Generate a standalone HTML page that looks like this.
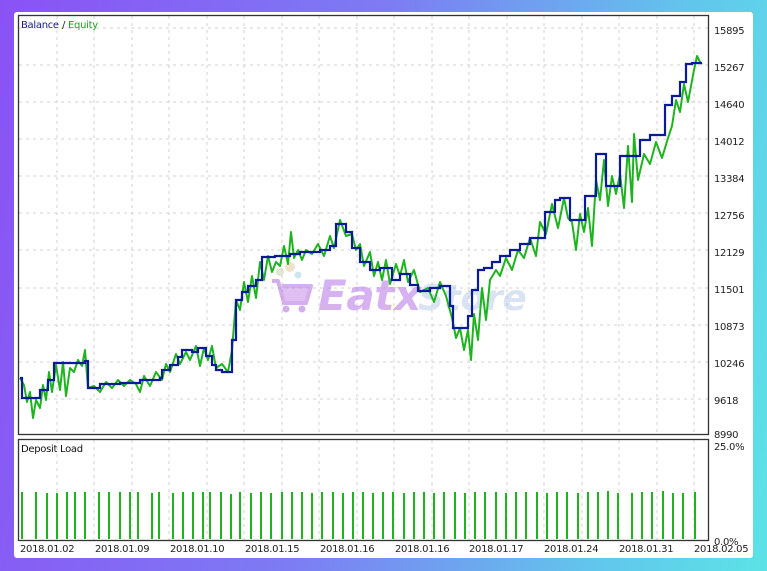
<!DOCTYPE html>
<html><head><meta charset="utf-8"><style>
html,body{margin:0;padding:0;width:767px;height:571px;overflow:hidden}
body{background:linear-gradient(100deg,#8a52f5 0%,#7d7cf3 45%,#62c6ec 80%,#5ce3e6 100%)}
svg{position:absolute;left:0;top:0}
text{font-family:"DejaVu Sans","Liberation Sans",sans-serif;letter-spacing:-0.3px}
</style></head><body>
<svg width="767" height="571" viewBox="0 0 767 571">
<rect x="14" y="12" width="739" height="546" rx="3" fill="#fff"/>
<g stroke="#d2d2d2" stroke-width="1" stroke-dasharray="3,4" fill="none">
<path d="M57 16V434M94 16V434M132 16V434M169 16V434M207 16V434M244 16V434M282 16V434M319 16V434M357 16V434M394 16V434M432 16V434M469 16V434M507 16V434M544 16V434M582 16V434M619 16V434M657 16V434M694 16V434"/>
<path d="M57 440V540M94 440V540M132 440V540M169 440V540M207 440V540M244 440V540M282 440V540M319 440V540M357 440V540M394 440V540M432 440V540M469 440V540M507 440V540M544 440V540M582 440V540M619 440V540M657 440V540M694 440V540"/>
<path d="M19 28H709M19 65H709M19 102H709M19 139H709M19 176H709M19 213H709M19 250H709M19 288H709M19 325H709M19 362H709M19 399H709"/>
</g>
<g opacity="0.55">
<circle cx="290" cy="267" r="5" fill="#e8c9a0"/><circle cx="280" cy="272" r="4" fill="#c8d8a8"/><circle cx="298" cy="275" r="3.5" fill="#a8d0e0"/>
<path d="M272 281h6l6 22h22l5-17h-29" stroke="#b070e0" stroke-width="4" fill="#c58ae8" stroke-linejoin="round"/>
<circle cx="286" cy="309" r="3.5" fill="#b070e0"/><circle cx="302" cy="309" r="3.5" fill="#b070e0"/>
<text x="318" y="310" font-size="42" font-weight="bold" font-style="italic" fill="#b874e8" font-family="Liberation Sans">Eatx</text>
<text x="418" y="310" font-size="36" font-weight="bold" font-style="italic" fill="#a8c0e0" opacity="0.8" font-family="Liberation Sans">Store</text>
</g>
<polyline fill="none" stroke="#1fb41f" stroke-width="2" stroke-linejoin="round" points="20,378 24,385 27,402 30,392 33,418 36,400 40,408 43,385 46,400 49,372 52,392 56,365 60,390 63,362 66,396 70,368 74,372 78,360 82,366 85,350 88,388 94,386 100,392 106,382 112,388 118,380 124,386 130,380 136,384 140,392 144,376 150,386 156,372 162,380 166,364 170,372 176,354 180,364 186,352 190,360 196,346 200,366 204,348 208,360 212,346 216,368 222,364 228,372 232,350 236,300 240,310 244,282 248,302 252,276 256,298 260,262 264,280 268,256 272,272 276,262 280,266 284,246 288,264 291,232 294,258 298,250 302,260 306,250 312,254 318,244 324,256 330,236 334,248 340,220 346,236 352,234 356,250 360,244 364,266 370,252 374,276 378,262 382,280 386,260 390,284 396,264 400,276 404,260 408,282 414,270 420,292 428,288 434,302 440,282 446,296 452,318 456,338 460,328 464,350 468,330 471,360 474,314 478,340 482,288 486,320 490,280 496,270 500,276 506,258 512,270 518,250 524,258 530,238 536,256 540,222 546,234 552,204 558,228 564,198 568,218 572,222 576,250 580,214 584,232 588,208 592,246 596,180 600,200 604,160 608,206 612,176 616,194 620,174 624,208 628,146 632,202 634,134 638,180 644,154 650,164 656,142 662,158 668,138 672,126 676,100 680,112 684,84 688,102 694,70 697,56 700,62 702,64"/>
<polyline fill="none" stroke="#0a1a9a" stroke-width="2.2" stroke-linejoin="miter" points="20,378 22,378 22,398 40,398 40,390 48,390 48,380 54,380 54,363 85,363 85,361 88,361 88,388 100,388 100,384 120,384 120,383 140,383 140,380 160,380 160,378 162,378 162,370 170,370 170,365 178,365 178,357 182,357 182,350 192,350 192,352 198,352 198,348 206,348 206,356 212,356 212,365 216,365 216,370 222,370 222,372 232,372 232,340 236,340 236,300 242,300 242,292 248,292 248,286 256,286 256,280 262,280 262,257 275,257 275,256 290,256 290,254 300,254 300,252 320,252 320,250 330,250 330,246 336,246 336,224 346,224 346,232 352,232 352,248 360,248 360,262 370,262 370,270 380,270 380,268 392,268 392,280 400,280 400,274 410,274 410,285 418,285 418,291 430,291 430,288 440,288 440,286 450,286 450,306 453,306 453,328 468,328 468,316 472,316 472,290 478,290 478,270 484,270 484,268 492,268 492,262 500,262 500,256 510,256 510,250 520,250 520,244 530,244 530,238 545,238 545,212 555,212 555,200 560,200 560,198 570,198 570,220 585,220 585,196 596,196 596,154 606,154 606,186 620,186 620,156 640,156 640,140 650,140 650,135 665,135 665,105 672,105 672,96 680,96 680,82 686,82 686,64 692,64 692,63 702,63"/>
<rect x="18.5" y="15.5" width="690" height="419" fill="none" stroke="#333" stroke-width="1.3"/>
<rect x="18.5" y="439.5" width="690" height="101" fill="none" stroke="#333" stroke-width="1.3"/>
<text x="21" y="28" font-size="10" fill="#1a1a8a">Balance</text>
<text x="62" y="28" font-size="10" fill="#222">/</text>
<text x="68" y="28" font-size="10" fill="#1fa01f">Equity</text>
<text x="21" y="452" font-size="10" fill="#111">Deposit Load</text>
<g font-size="10" fill="#222">
<text x="714" y="34">15895</text><text x="714" y="71">15267</text><text x="714" y="108">14640</text><text x="714" y="145">14012</text><text x="714" y="182">13384</text><text x="714" y="219">12756</text><text x="714" y="256">12129</text><text x="714" y="293">11501</text><text x="714" y="330">10873</text><text x="714" y="367">10246</text><text x="714" y="404">9618</text><text x="714" y="438">8990</text>
<text x="714" y="450">25.0%</text><text x="714" y="545">0.0%</text>
<text x="20" y="552">2018.01.02</text><text x="95" y="552">2018.01.09</text><text x="170" y="552">2018.01.10</text><text x="245" y="552">2018.01.15</text><text x="320" y="552">2018.01.16</text><text x="395" y="552">2018.01.16</text><text x="469" y="552">2018.01.17</text><text x="544" y="552">2018.01.24</text><text x="619" y="552">2018.01.31</text><text x="694" y="552">2018.02.05</text>
</g>
<g stroke="#1fb41f" stroke-width="2">
<path d="M22 492V539M36 492V539M47 493V539M57 493V539M67 492V539M75 492V539M85 492V539M99 492V539M109 492V539M120 492V539M130 492V539M138 492V539M152 493V539M159 492V539M173 493V539M183 492V539M193 492V539M203 492V539M210 492V539M221 492V539M231 494V539M240 492V539M251 493V539M261 492V539M271 493V539M282 492V539M292 492V539M302 492V539M312 493V539M322 492V539M333 492V539M343 493V539M353 492V539M363 492V539M373 493V539M383 492V539M393 492V539M404 493V539M414 492V539M424 492V539M434 493V539M444 492V539M455 492V539M465 493V539M475 492V539M485 492V539M496 492V539M506 493V539M516 492V539M526 492V539M537 492V539M547 493V539M557 492V539M567 492V539M578 493V539M588 492V539M598 492V539M608 491V539M618 493V539M632 493V539M642 492V539M652 492V539M663 491V539M673 493V539M683 493V539M695 492V539"/>
</g>
</svg>
</body></html>
